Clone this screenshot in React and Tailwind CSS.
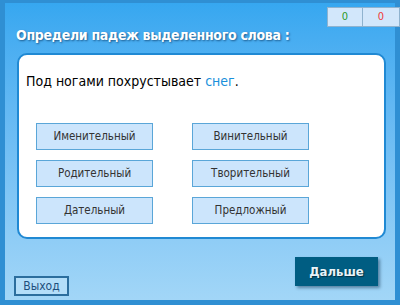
import React from 'react';

const cases = [
    ['Именительный', 'Винительный'],
    ['Родительный', 'Творительный'],
    ['Дательный', 'Предложный'],
];

function CaseButton({ label }) {
    return (
        <button className="h-[27px] w-[117px] bg-[#cce5fc] border border-[#5aa6d8] text-[#333] text-[11.5px] leading-none">
            {label}
        </button>
    );
}

export default function App() {
    return (
        <div
            className="relative w-[400px] h-[305px] border-l-[5px] border-r-[5px] border-t-[3px] border-b-[5px] border-[#2f8fd3] bg-gradient-to-b from-[#36a7f0] to-[#a2d6f7] flex flex-col"
            style={{ fontFamily: '"DejaVu Sans Condensed", "DejaVu Sans", Verdana, sans-serif' }}
        >
            {/* score */}
            <div className="absolute right-[-5px] top-[4px] flex">
                <div className="w-[36px] h-[20px] bg-[#d2e7fb] border border-[#8fb3cf] flex items-center justify-center text-[11px] text-[#2c9a2c]">0</div>
                <div className="w-[37px] h-[20px] bg-[#d2e7fb] border border-l-0 border-[#8fb3cf] flex items-center justify-center text-[11px] text-[#f03a3a]">0</div>
            </div>

            <h1
                className="ml-[11px] mt-[22px] h-[28px] text-white font-bold text-[14px] tracking-[-0.3px] leading-[20px]"
                style={{ textShadow: '1px 1px 2px rgba(0,40,80,0.6)' }}
            >
                Определи падеж выделенного слова :
            </h1>

            <div className="ml-[12px] mr-[9px] h-[186px] bg-white border-2 border-[#2089d3] rounded-[10px] px-[7px] pt-[15px]">
                <p className="text-[14px] leading-[22px] text-black">
                    Под ногами похрустывает <span className="text-[#1a90db]">снег</span>.
                </p>
                <div className="mt-[31px] ml-[10px] grid grid-cols-[117px_117px] gap-x-[39px] gap-y-[10px]">
                    {cases.map(([a, b]) => (
                        <React.Fragment key={a}>
                            <CaseButton label={a} />
                            <CaseButton label={b} />
                        </React.Fragment>
                    ))}
                </div>
            </div>

            <div className="flex-1 flex items-end justify-between pl-[9px] pr-[17px] pb-[4px]">
                <button className="w-[55px] h-[20px] border-2 border-[#2b6e9e] bg-[#b3def9] text-[12px] text-[#1e4f7c] leading-none">
                    Выход
                </button>
                <button
                    className="mb-[10px] w-[83px] h-[29px] bg-[#005d82] text-[#e8f2f8] font-bold text-[13px] shadow-[2px_2px_3px_rgba(0,30,60,0.45)]"
                    style={{ textShadow: '1px 1px 1px rgba(0,0,0,0.5)' }}
                >
                    Дальше
                </button>
            </div>
        </div>
    );
}
